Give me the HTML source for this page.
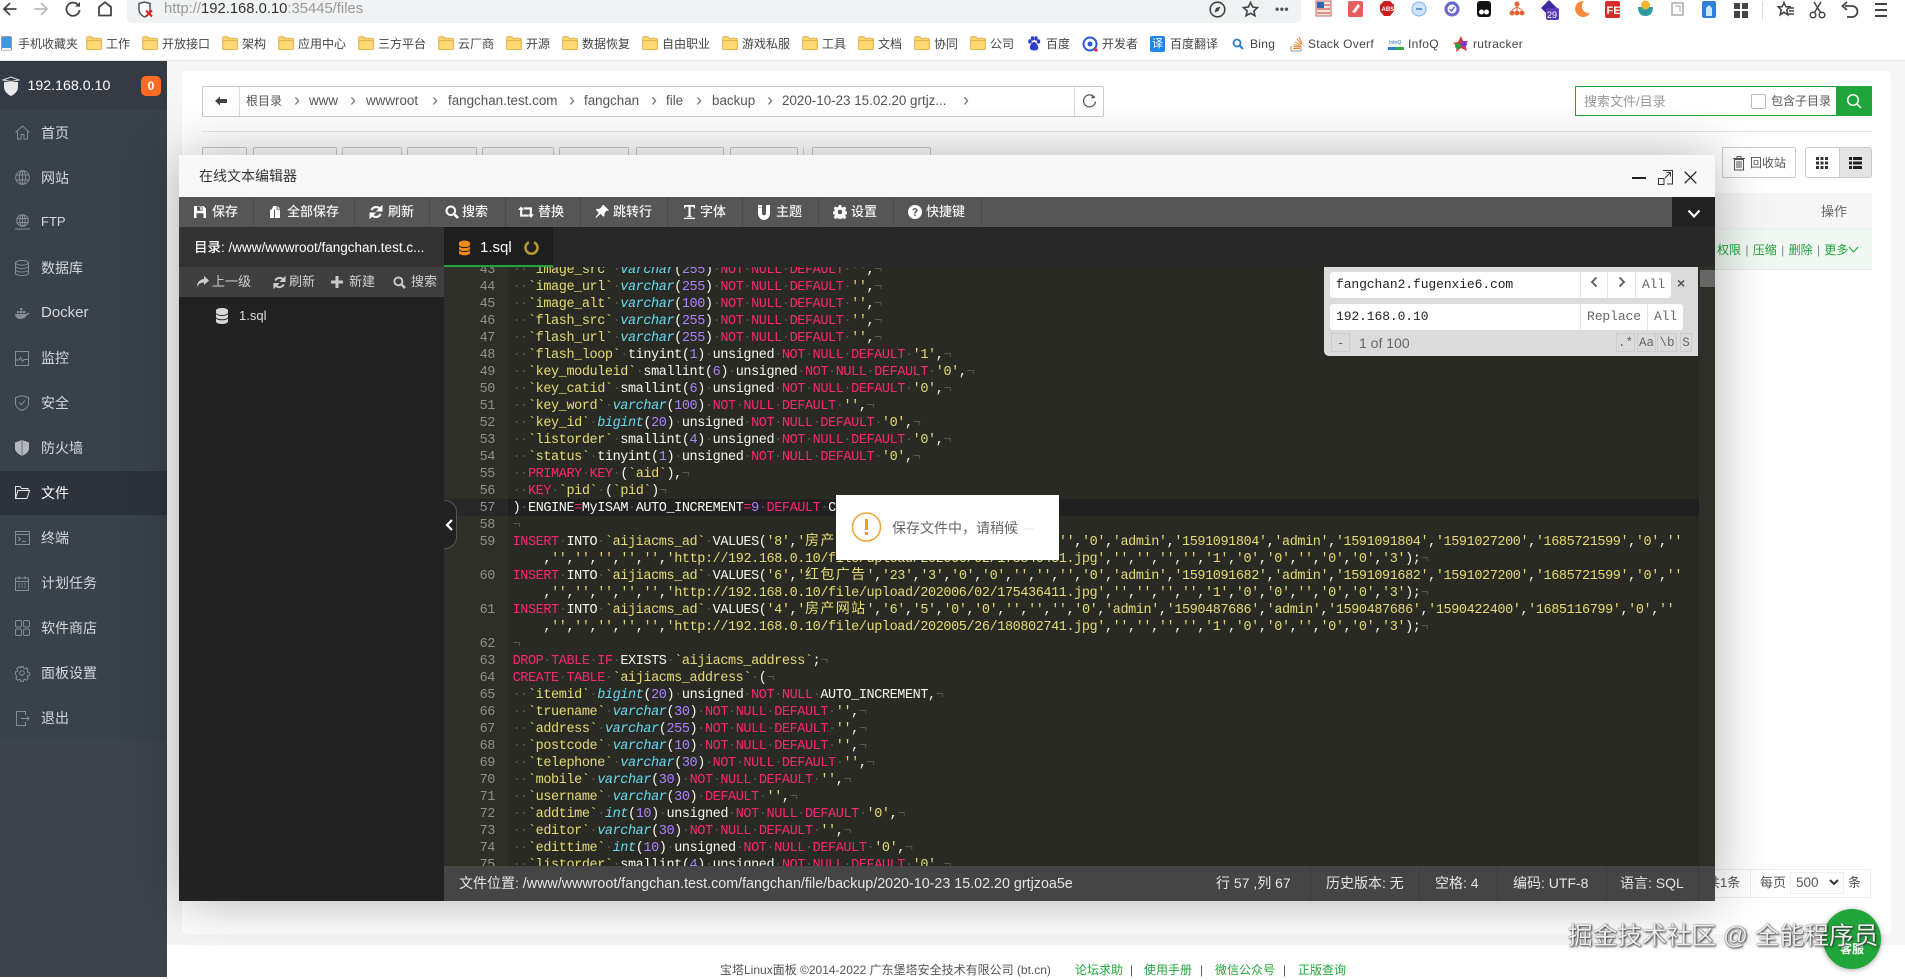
<!DOCTYPE html>
<html lang="zh"><head><meta charset="utf-8"><title>在线文本编辑器</title>
<style>
*{box-sizing:border-box}
html,body{margin:0;padding:0;width:1905px;height:977px;overflow:hidden;background:#fff;font-family:"Liberation Sans","Noto Sans CJK SC",sans-serif;color:#333}
.t{position:absolute;white-space:nowrap;line-height:20px;height:20px}
.a{position:absolute}
svg.i{position:absolute;overflow:visible}
.bm{font-size:12px;color:#444;top:34px}
.side{font-size:14px;color:#d5d8db;left:41px}
.path{font-size:13.4px;color:#555;top:91px}
.arr{font-size:18px;color:#777;top:90px}
.tb{font-size:13px;color:#f2f2f2;top:202px;font-weight:500}
.sep{position:absolute;top:197px;width:1px;height:30px;background:#4a4a4a}
.fb{font-size:13px;color:#cfcfcf;top:272px}
.st{font-size:14px;color:#e6e6e6;top:873px}
.ssep{position:absolute;top:866px;width:1px;height:35px;background:#3c3c3c}
.btn{position:absolute;top:147px;height:31px;border:1px solid #ccc;border-radius:2px;background:#fff}
pre{margin:0;font-family:"Liberation Mono","DejaVu Sans Mono",monospace;font-size:13.5px;letter-spacing:-.41px;line-height:17px}
.code{color:#f8f8f2}
.code b{color:#f92672;font-weight:normal}
.code i{color:#66d9ef;font-style:italic}
.code u{color:#e6db74;text-decoration:none}
.code s{color:#ae81ff;text-decoration:none}
.code em{color:#55564f;font-style:normal}
.code span{font-family:"Noto Sans CJK SC",sans-serif;font-size:14px;letter-spacing:1.38px;line-height:0}
.sb{position:absolute;background:#fff;height:26px;font-family:"Liberation Mono",monospace;font-size:13px;line-height:26px;color:#555}
.sc{position:absolute;top:0;height:26px;border-left:1px solid #e2e2e2;text-align:center}
.opt{position:absolute;top:333px;height:19px;border:1px solid #ccc;font-family:"Liberation Mono",monospace;font-size:12.5px;line-height:18px;text-align:center;color:#666}
.g{color:#20a53a}
</style></head><body>
<svg width="0" height="0" style="position:absolute">
<symbol id="fo" viewBox="0 0 16 14"><path d="M.7 2.2c0-.8.5-1.4 1.3-1.4h3.8l1.5 1.6h6.7c.8 0 1.3.6 1.3 1.4v8.6c0 .8-.5 1.3-1.3 1.3H2c-.8 0-1.3-.5-1.3-1.3z" fill="#ffd873" stroke="#e3aa3d"/><path d="M1 4.4h14" stroke="#e3aa3d" stroke-width=".8"/></symbol>
<symbol id="save" viewBox="0 0 14 14"><path fill="#fff" fill-rule="evenodd" d="M1 1h9.5L13 3.5V13H1zM4 1.5v4.2h5.6V1.5zM7.3 2h1.5v3H7.3zM3.5 8.2V13h7V8.2z"/></symbol>
<symbol id="copy" viewBox="0 0 14 14"><path fill="#fff" d="M5.2 1h3.4v3.6H12V13H7V4.6H3.5zM9.5 1l2.6 2.7H9.5zM2 4.6h4v8.4H2z"/></symbol>
<symbol id="ref" viewBox="0 0 14 14"><path fill="none" stroke-width="2.1" d="M11.6 4.6A5.2 5.2 0 0 0 2.4 5M2.4 9.4A5.2 5.2 0 0 0 11.6 9"/><path d="M13 1v5H8zM1 13V8h5z"/></symbol>
<symbol id="sea" viewBox="0 0 14 14"><circle cx="5.8" cy="5.8" r="4.3" fill="none" stroke="#fff" stroke-width="2"/><path d="M9 9l4 4" stroke="#fff" stroke-width="2.6"/></symbol>
<symbol id="ret" viewBox="0 0 16 14"><path fill="#fff" d="M3 1.5l3.2 3.4H4.2v4.6h5.3l1.8 2.1H2.1V4.9H0zM5 2.4h8.9v7h2.1L13 12.7 9.8 9.4h2V4.5H6.7z"/></symbol>
<symbol id="pin" viewBox="0 0 14 14"><path fill="#fff" d="M8.6 0L14 5.4l-1.3.5-1-.5-2.4 3 .2 2.3-1 1-3-3L1 13l-.8-.2 3.6-5-3-3 1-1 2.3.2 3-2.4-.5-1z"/></symbol>
<symbol id="font" viewBox="0 0 14 14"><path fill="#fff" d="M1 0h11v3.4h-1c-.2-1-.4-1.6-1.2-1.6H7.6v9.6h1.6V12H3.800v-.6h1.7V1.800H3.400c-.9 0-1.100.6-1.300 1.600H1zM1 12.800h11V14H1z"/></symbol>
<symbol id="mag" viewBox="0 0 12 15"><path fill="#fff" d="M0 0h4v8.300c0 1.200.9 2 2 2s2-.8 2-2V0h4v8.300C12 12 9.400 15 6 15S0 12 0 8.300zM0 3h4v-.4H0zM8 2.600h4V3H8z"/></symbol>
<symbol id="cog" viewBox="0 0 14 14"><path fill="#fff" fill-rule="evenodd" d="M5.800 0h2.400l.4 2 1.300.6 1.700-1.100 1.700 1.700-1.100 1.700.6 1.300 2 .4v2.400l-2 .4-.6 1.300 1.100 1.700-1.700 1.700-1.700-1.100-1.300.6-.4 2H5.800l-.4-2-1.300-.6-1.700 1.100L.7 12.300l1.100-1.700-.6-1.300-2-.4V6.500l2-.4.6-1.300L.7 3.100 2.400 1.400l1.700 1.100 1.300-.6zM7 4.700a2.300 2.300 0 1 0 0 4.600 2.300 2.300 0 0 0 0-4.600z"/></symbol>
<symbol id="que" viewBox="0 0 14 14"><circle cx="7" cy="7" r="7" fill="#fff"/><path d="M4.500 5.200C4.700 3.800 5.700 3.100 7 3.100c1.500 0 2.600.9 2.600 2.200 0 1.900-2 1.900-2 3.300H6.200c0-2.200 1.800-2.200 1.800-3.300 0-.5-.4-.9-1-.9-.6 0-1 .4-1.100 1z" fill="#565656"/><rect x="6.200" y="9.300" width="1.500" height="1.600" fill="#565656"/></symbol>
<symbol id="db" viewBox="0 0 12 16"><path d="M0 2.500C0 1 2.700 0 6 0s6 1 6 2.500V4.600C12 6 9.300 7 6 7S0 6 0 4.600zM0 6.300C1.300 7.500 3.500 8 6 8s4.700-.5 6-1.700v2.600C12 10.300 9.300 11.300 6 11.300S0 10.300 0 8.900zM0 10.600c1.300 1.200 3.500 1.700 6 1.700s4.700-.5 6-1.700v2.800C12 15 9.300 16 6 16s-6-1-6-2.600z"/></symbol>
</svg>

<!-- browser chrome -->
<div class="a" style="left:0;top:0;width:1905px;height:61px;background:#fff;border-bottom:1px solid #e8e8e8"></div>
<div class="a" style="left:127px;top:0;width:1174px;height:23px;background:#f1f2f3;border-radius:0 0 5px 5px"></div>
<svg class="i" style="left:2px;top:1px" width="16" height="16" viewBox="0 0 16 16"><path d="M14.500 8H2M8 2L2 8l6 6" fill="none" stroke="#444" stroke-width="1.800"/></svg>
<svg class="i" style="left:33px;top:1px" width="16" height="16" viewBox="0 0 16 16"><path d="M1.500 8H14M8 2l6 6-6 6" fill="none" stroke="#bbb" stroke-width="1.800"/></svg>
<svg class="i" style="left:65px;top:1px" width="16" height="16" viewBox="0 0 16 16"><path d="M13.500 4.500A6.600 6.600 0 1 0 14.600 9" fill="none" stroke="#444" stroke-width="1.800"/><path d="M10 5.600h5V1z" fill="#444"/></svg>
<svg class="i" style="left:97px;top:1px" width="16" height="16" viewBox="0 0 16 16"><path d="M2 14.500V6l6-4.800L14 6v8.500z" fill="none" stroke="#444" stroke-width="1.800" stroke-linejoin="round"/></svg>
<svg class="i" style="left:137px;top:1px" width="18" height="18" viewBox="0 0 18 18"><path d="M2 2.500L7.500 1 13 2.500v6c0 3.500-2.500 6-5.500 7.500C4.500 14.500 2 12 2 8.500z" fill="#fff" stroke="#555" stroke-width="1.500"/><path d="M9 9.500l6 6M15 9.500l-6 6" stroke="#d22" stroke-width="2"/></svg>
<div class="t" style="left:164px;top:-1px;font-size:14.800px;color:#999">http://<span style="color:#333">192.168.0.10</span>:35445/files</div>
<svg class="i" style="left:1209px;top:1px" width="17" height="17" viewBox="0 0 17 17"><circle cx="8.500" cy="8.500" r="7.300" fill="none" stroke="#444" stroke-width="1.600"/><path d="M11.500 5.500L9.500 10 5.500 11.500 7 7z" fill="#444"/></svg>
<svg class="i" style="left:1242px;top:1px" width="17" height="17" viewBox="0 0 17 17"><path d="M8.500 1.500l2.100 4.500 4.900.6-3.600 3.300 1 4.800-4.400-2.400-4.400 2.400 1-4.800L1.500 6.600 6.400 6z" fill="none" stroke="#444" stroke-width="1.600"/></svg>
<div class="t" style="left:1275px;top:-1px;font-size:12px;font-weight:bold;color:#555;letter-spacing:.5px">•••</div>
<!-- extensions -->
<svg class="i" style="left:1315px;top:0" width="450" height="22" viewBox="0 0 450 22">
<rect x="1" y="1" width="15" height="15" fill="#f1e6de" stroke="#c66" /><path d="M2 5h13M2 9h13M2 13h13" stroke="#d33"/><rect x="2" y="2" width="7" height="6" fill="#36a"/>
<g transform="translate(33,0)"><rect x="0" y="1" width="15" height="16" rx="2" fill="#e85d5d"/><path d="M4 12l6-8 2 2-5 7z" fill="#fff"/></g>
<g transform="translate(64,0)"><path d="M5 1h6l4 4v6l-4 5H5l-4-5V5z" fill="#c81e1e"/><text x="2.500" y="11" font-size="6" font-weight="bold" fill="#fff" font-family="Liberation Sans">ABS</text></g>
<g transform="translate(96,0)"><circle cx="8" cy="9" r="7" fill="#cfe3fb" stroke="#7fb1ec"/><rect x="5" y="8" width="6" height="2" fill="#5f9be0"/></g>
<g transform="translate(129,0)"><circle cx="8" cy="9" r="7.500" fill="#6a66cc"/><circle cx="8" cy="9" r="4.500" fill="#fff"/><path d="M5.500 9l2 2 3-4" stroke="#6a66cc" stroke-width="1.500" fill="none"/></g>
<g transform="translate(161,0)"><rect x="1" y="1" width="14" height="16" rx="3" fill="#111"/><circle cx="5.500" cy="12" r="2.500" fill="#fff"/><circle cx="10.500" cy="12" r="2.500" fill="#fff"/></g>
<g transform="translate(194,0)"><circle cx="8" cy="4" r="2.500" fill="#e2633b"/><circle cx="3" cy="13" r="2.500" fill="#e2633b"/><circle cx="8" cy="13" r="2.500" fill="#e2633b"/><circle cx="13" cy="13" r="2.500" fill="#e2633b"/><path d="M8 6v5M3 10l5-3 5 3" stroke="#e2633b" fill="none"/></g>
<g transform="translate(226,0)"><path d="M8 0l8 8-8 8-8-8z" fill="#3a2a9e"/><rect x="5" y="8" width="13" height="12" rx="2" fill="#5a3bb4"/><text x="6" y="18" font-size="9" fill="#fff" font-family="Liberation Sans">29</text></g>
<g transform="translate(258,0)"><path d="M11 1a8 8 0 1 0 6 12 7 7 0 0 1-6-12z" fill="#f98a3c"/></g>
<g transform="translate(290,0)"><rect x="0" y="1" width="15" height="17" rx="2" fill="#d62b2b"/><text x="1.500" y="14" font-size="11" font-weight="bold" fill="#fff" font-family="Liberation Sans">FE</text></g>
<g transform="translate(322,0)"><path d="M1 7h15c0 6-3 9-7.500 9S1 13 1 7z" fill="#2c9aa0"/><circle cx="8.500" cy="5" r="4.500" fill="#f1b533"/></g>
<g transform="translate(356,0)"><rect x="1" y="3" width="11" height="12" fill="none" stroke="#aaa" stroke-width="1.500"/><path d="M4 6h5v6" fill="none" stroke="#aaa"/></g>
<g transform="translate(386,0)"><rect x="1" y="1" width="14" height="17" rx="2" fill="#2f80d8"/><path d="M5 16V8l3-3 3 3v8z" fill="#cfe7fb"/></g>
<g transform="translate(419,0)" fill="#444"><rect x="0" y="3" width="6" height="6"/><rect x="8" y="3" width="6" height="6"/><rect x="0" y="11" width="6" height="7"/><rect x="8" y="11" width="6" height="7"/></g>
</svg>
<div class="a" style="left:1762px;top:2px;width:1px;height:18px;background:#ddd"></div>
<svg class="i" style="left:1777px;top:1px" width="18" height="18" viewBox="0 0 18 18"><path d="M7 1.500l1.800 4.300h4l-3 3 1 5-3.800-2.600-3.800 2.600 1-5-3-3h4z" fill="none" stroke="#444" stroke-width="1.500"/><path d="M12 7h5M12 10h5M11 13h6" stroke="#444" stroke-width="1.400"/></svg>
<svg class="i" style="left:1809px;top:1px" width="17" height="18" viewBox="0 0 17 18"><circle cx="4" cy="14" r="2.800" fill="none" stroke="#444" stroke-width="1.500"/><circle cx="13" cy="14" r="2.800" fill="none" stroke="#444" stroke-width="1.500"/><path d="M5.500 11.500L12 1M11.500 11.500L5 1" stroke="#444" stroke-width="1.500"/></svg>
<svg class="i" style="left:1841px;top:1px" width="17" height="18" viewBox="0 0 17 18"><path d="M4 5h7a4.500 4.500 0 0 1 0 11H6" fill="none" stroke="#444" stroke-width="1.800"/><path d="M6 1L1.500 5 6 9" fill="none" stroke="#444" stroke-width="1.800"/></svg>
<svg class="i" style="left:1874px;top:1px" width="14" height="18" viewBox="0 0 14 18"><path d="M1 3h12M1 9h12M1 15h12" stroke="#444" stroke-width="2"/></svg>

<!-- bookmarks -->
<svg class="i" style="left:1px;top:36px" width="11" height="15" viewBox="0 0 11 15"><rect x=".5" y=".5" width="10" height="14" rx="1.500" fill="#3b95e8" stroke="#999"/><rect x="1" y="12" width="9" height="2.500" fill="#eee"/></svg>
<div class="t bm" style="left:18px">手机收藏夹</div>
<svg class="i" style="left:86px;top:36px" width="16" height="14"><use href="#fo"/></svg><div class="t bm" style="left:106px">工作</div>
<svg class="i" style="left:142px;top:36px" width="16" height="14"><use href="#fo"/></svg><div class="t bm" style="left:162px">开放接口</div>
<svg class="i" style="left:222px;top:36px" width="16" height="14"><use href="#fo"/></svg><div class="t bm" style="left:242px">架构</div>
<svg class="i" style="left:278px;top:36px" width="16" height="14"><use href="#fo"/></svg><div class="t bm" style="left:298px">应用中心</div>
<svg class="i" style="left:358px;top:36px" width="16" height="14"><use href="#fo"/></svg><div class="t bm" style="left:378px">三方平台</div>
<svg class="i" style="left:438px;top:36px" width="16" height="14"><use href="#fo"/></svg><div class="t bm" style="left:458px">云厂商</div>
<svg class="i" style="left:506px;top:36px" width="16" height="14"><use href="#fo"/></svg><div class="t bm" style="left:526px">开源</div>
<svg class="i" style="left:562px;top:36px" width="16" height="14"><use href="#fo"/></svg><div class="t bm" style="left:582px">数据恢复</div>
<svg class="i" style="left:642px;top:36px" width="16" height="14"><use href="#fo"/></svg><div class="t bm" style="left:662px">自由职业</div>
<svg class="i" style="left:722px;top:36px" width="16" height="14"><use href="#fo"/></svg><div class="t bm" style="left:742px">游戏私服</div>
<svg class="i" style="left:802px;top:36px" width="16" height="14"><use href="#fo"/></svg><div class="t bm" style="left:822px">工具</div>
<svg class="i" style="left:858px;top:36px" width="16" height="14"><use href="#fo"/></svg><div class="t bm" style="left:878px">文档</div>
<svg class="i" style="left:914px;top:36px" width="16" height="14"><use href="#fo"/></svg><div class="t bm" style="left:934px">协同</div>
<svg class="i" style="left:970px;top:36px" width="16" height="14"><use href="#fo"/></svg><div class="t bm" style="left:990px">公司</div>
<svg class="i" style="left:1027px;top:36px" width="14" height="15" viewBox="0 0 14 15" fill="#2f3fc4"><ellipse cx="3" cy="5.500" rx="1.700" ry="2.200"/><ellipse cx="5.500" cy="2.500" rx="1.700" ry="2.200"/><ellipse cx="9" cy="2.500" rx="1.700" ry="2.200"/><ellipse cx="11.500" cy="5.500" rx="1.700" ry="2.200"/><path d="M7 6c2 0 5 4 4 7-1 2-6 2-8 0-1-3 2-7 4-7z"/></svg>
<div class="t bm" style="left:1046px">百度</div>
<svg class="i" style="left:1082px;top:36px" width="16" height="16" viewBox="0 0 16 16"><circle cx="8" cy="8" r="6.500" fill="none" stroke="#2a58d8" stroke-width="2"/><circle cx="8" cy="8" r="2.500" fill="#2a58d8"/><circle cx="14" cy="14" r="1.800" fill="#e33"/></svg>
<div class="t bm" style="left:1102px">开发者</div>
<div class="a" style="left:1150px;top:36px;width:15px;height:16px;background:#1f88ef;border-radius:2px;color:#fff;font-size:11px;line-height:16px;text-align:center">译</div>
<div class="t bm" style="left:1170px">百度翻译</div>
<svg class="i" style="left:1232px;top:38px" width="12" height="12" viewBox="0 0 12 12"><circle cx="5" cy="5" r="3.500" fill="none" stroke="#2b7bd1" stroke-width="1.800"/><path d="M7.500 7.500L11 11" stroke="#2b7bd1" stroke-width="2"/></svg>
<div class="t bm" style="left:1250px;letter-spacing:.3px">Bing</div>
<svg class="i" style="left:1290px;top:36px" width="13" height="16" viewBox="0 0 13 16"><path d="M1 10v5h10v-5" fill="none" stroke="#999"/><path d="M3 12.500h7M3.200 10.500l6.800.8M3.800 8.500l6.500 2M5 6l6 3.500M7 3l4.500 5.500M9 1l3 6.500" stroke="#e88326"/></svg>
<div class="t bm" style="left:1308px;width:67px;overflow:hidden;letter-spacing:.3px">Stack Overf</div>
<svg class="i" style="left:1388px;top:37px" width="16" height="15" viewBox="0 0 16 15"><text x="1" y="7" font-size="5" fill="#36a" font-family="Liberation Sans">InfoQ</text><rect x="0" y="10" width="7" height="3" fill="#2a7be0"/><rect x="7" y="10" width="9" height="3" fill="#2aa84a"/></svg>
<div class="t bm" style="left:1408px;letter-spacing:.3px">InfoQ</div>
<svg class="i" style="left:1453px;top:36px" width="16" height="16" viewBox="0 0 16 16"><path d="M8 0l2 5 5 0-3 4 2 6-6-3-5 4 1-6L0 7l5-1z" fill="#d33"/><circle cx="5" cy="10" r="3" fill="#2a9d4a"/><circle cx="11" cy="8" r="3" fill="#7b3bd1"/></svg>
<div class="t bm" style="left:1473px;letter-spacing:.3px">rutracker</div>

<!-- page background -->
<div class="a" style="left:167px;top:61px;width:1738px;height:884px;background:#f6f6f6"></div>
<div class="a" style="left:182px;top:71px;width:1709px;height:863px;background:#fff;border-radius:5px"></div>

<!-- path bar -->
<div class="a" style="left:202px;top:86px;width:902px;height:31px;border:1px solid #ccc;border-radius:2px;background:#fff"></div>
<div class="a" style="left:239px;top:87px;width:1px;height:29px;background:#ddd"></div>
<div class="a" style="left:1074px;top:87px;width:1px;height:29px;background:#ddd"></div>
<svg class="i" style="left:215px;top:95px" width="12" height="12" viewBox="0 0 12 12"><path d="M0 6l5-4.500V4h7v4H5v2.500z" fill="#444"/></svg>
<svg class="i" style="left:1082px;top:93px" width="15" height="16" viewBox="0 0 15 16"><path d="M12.500 4.500A6 6 0 1 0 13.500 8.500" fill="none" stroke="#555" stroke-width="1.200"/><path d="M10 1.500l3.500 3.200L9.500 5.500z" fill="#555"/></svg>
<div class="t path" style="left:246px;font-size:12px">根目录</div><div class="t arr" style="left:294px">›</div>
<div class="t path" style="left:309px">www</div><div class="t arr" style="left:350px">›</div>
<div class="t path" style="left:366px">wwwroot</div><div class="t arr" style="left:432px">›</div>
<div class="t path" style="left:448px">fangchan.test.com</div><div class="t arr" style="left:569px">›</div>
<div class="t path" style="left:584px">fangchan</div><div class="t arr" style="left:651px">›</div>
<div class="t path" style="left:666px">file</div><div class="t arr" style="left:696px">›</div>
<div class="t path" style="left:712px">backup</div><div class="t arr" style="left:767px">›</div>
<div class="t path" style="left:782px">2020-10-23 15.02.20 grtjz...</div><div class="t arr" style="left:963px">›</div>

<!-- search -->
<div class="a" style="left:1575px;top:86px;width:262px;height:30px;border:1px solid #20a53a;background:#fff"></div>
<div class="a" style="left:1836px;top:86px;width:36px;height:30px;background:#20a53a"></div>
<svg class="i" style="left:1846px;top:93px" width="16" height="16" viewBox="0 0 16 16"><circle cx="7" cy="7" r="5.300" fill="none" stroke="#fff" stroke-width="1.500"/><path d="M11 11l4 4" stroke="#fff" stroke-width="1.500"/></svg>
<div class="t" style="left:1584px;top:92px;font-size:13px;color:#999">搜索文件/目录</div>
<div class="a" style="left:1751px;top:94px;width:15px;height:15px;border:1px solid #bbb;border-radius:2px;background:#fff"></div>
<div class="t" style="left:1771px;top:91px;font-size:12px;color:#555">包含子目录</div>
<div class="a" style="left:202px;top:131px;width:1670px;height:1px;background:#e6e6e6"></div>

<!-- buttons row -->
<div class="btn" style="left:202px;width:45px"></div>
<div class="btn" style="left:253px;width:84px"></div>
<div class="btn" style="left:342px;width:60px"></div>
<div class="btn" style="left:407px;width:70px"></div>
<div class="btn" style="left:482px;width:72px"></div>
<div class="btn" style="left:559px;width:70px"></div>
<div class="btn" style="left:636px;width:88px"></div>
<div class="btn" style="left:730px;width:68px"></div>
<div class="a" style="left:803px;top:147px;width:1px;height:31px;background:#ddd"></div>
<div class="btn" style="left:812px;width:119px"></div>
<div class="btn" style="left:1722px;width:74px"></div>
<svg class="i" style="left:1733px;top:156px" width="12" height="14" viewBox="0 0 12 14"><path d="M0 2.500h12M4 2V.6h4V2M1.500 3.500h9V14h-9z" fill="none" stroke="#555"/><path d="M4 5v7M6 5v7M8 5v7" stroke="#555"/></svg>
<div class="t" style="left:1750px;top:153px;font-size:12px;color:#555">回收站</div>
<div class="btn" style="left:1805px;width:67px;border-radius:3px;overflow:hidden"><div class="a" style="left:33px;top:0;width:33px;height:29px;background:#e4e4e4;border-left:1px solid #ccc"></div></div>
<svg class="i" style="left:1816px;top:157px" width="12" height="12" viewBox="0 0 12 12" fill="#333"><rect width="3" height="3"/><rect x="4.500" width="3" height="3"/><rect x="9" width="3" height="3"/><rect y="4.500" width="3" height="3"/><rect x="4.500" y="4.500" width="3" height="3"/><rect x="9" y="4.500" width="3" height="3"/><rect y="9" width="3" height="3"/><rect x="4.500" y="9" width="3" height="3"/><rect x="9" y="9" width="3" height="3"/></svg>
<svg class="i" style="left:1849px;top:157px" width="13" height="12" viewBox="0 0 13 12" fill="#222"><rect width="3" height="3"/><rect x="4" width="9" height="3"/><rect y="4.500" width="3" height="3"/><rect x="4" y="4.500" width="9" height="3"/><rect y="9" width="3" height="3"/><rect x="4" y="9" width="9" height="3"/></svg>

<!-- table -->
<div class="a" style="left:1715px;top:193px;width:157px;height:36px;background:#f6f6f6;border-bottom:1px solid #eee"></div>
<div class="t" style="left:1821px;top:202px;font-size:13px;color:#666">操作</div>
<div class="a" style="left:1715px;top:229px;width:157px;height:41px;background:#f1f8f3;border-bottom:1px solid #e9e9e9"></div>
<div class="t g" style="left:1717px;top:240px;font-size:12px;word-spacing:1px">权限 <span style="color:#888">|</span> 压缩 <span style="color:#888">|</span> 删除 <span style="color:#888">|</span> 更多<svg width="11" height="8" viewBox="0 0 11 8"><path d="M1 1l4.500 5L10 1" fill="none" stroke="#20a53a"/></svg></div>

<!-- pagination -->
<div class="a" style="left:1700px;top:869px;width:171px;height:29px;border:1px solid #eee"></div>
<div class="a" style="left:1750px;top:869px;width:1px;height:29px;background:#eee"></div>
<div class="t" style="left:1707px;top:873px;font-size:13px;color:#555">共1条</div>
<div class="t" style="left:1760px;top:873px;font-size:13px;color:#555">每页</div>
<div class="a" style="left:1790px;top:872px;width:54px;height:22px;border:1px solid #eee;background:#fff;font-size:13.500px;line-height:20px;padding-left:5px;color:#555">500<svg style="position:absolute;left:38px;top:6px" width="10" height="8" viewBox="0 0 10 8"><path d="M1 1l4 4 4-4" fill="none" stroke="#333" stroke-width="2"/></svg></div>
<div class="t" style="left:1848px;top:873px;font-size:13px;color:#555">条</div>

<!-- footer -->
<div class="t" style="left:720px;top:960px;font-size:12px;color:#555">宝塔Linux面板 ©2014-2022 广东堡塔安全技术有限公司 (bt.cn)</div>
<div class="t g" style="left:1075px;top:960px;font-size:12px">论坛求助</div><div class="t" style="left:1130px;top:960px;font-size:12px;color:#555">|</div>
<div class="t g" style="left:1144px;top:960px;font-size:12px">使用手册</div><div class="t" style="left:1200px;top:960px;font-size:12px;color:#555">|</div>
<div class="t g" style="left:1215px;top:960px;font-size:12px">微信公众号</div><div class="t" style="left:1283px;top:960px;font-size:12px;color:#555">|</div>
<div class="t g" style="left:1298px;top:960px;font-size:12px">正版查询</div>

<!-- sidebar -->
<div class="a" style="left:0;top:61px;width:167px;height:916px;background:#3d444d"></div>
<div class="a" style="left:0;top:110px;width:167px;height:630px;background:#39414a"></div>
<div class="a" style="left:0;top:61px;width:167px;height:49px;background:#343b44"></div>
<div class="a" style="left:0;top:471px;width:167px;height:44px;background:#2d333c"></div>
<svg class="i" style="left:2px;top:76px" width="18" height="20" viewBox="0 0 18 20"><path d="M2 6h14v5c0 4-3 7-7 9-4-2-7-5-7-9z" fill="#e8e8e8"/><path d="M1 4l8-3 8 3-8 1.500z" fill="none" stroke="#ddd"/></svg>
<div class="t" style="left:27.500px;top:76px;font-size:14.200px;color:#fff">192.168.0.10</div>
<div class="a" style="left:141px;top:76px;width:20px;height:20px;background:#ff6b22;border-radius:5px;color:#fff;font-size:12px;font-weight:bold;line-height:20px;text-align:center">0</div>
<svg class="i" style="left:15px;top:125px" width="15" height="15" viewBox="0 0 15 15"><path d="M.5 7.500L7.500 1l7 6.500M2.500 6.500V14h3.500V9.500h3V14h3.500V6.500" fill="none" stroke="#868c93"/></svg>
<div class="t side" style="top:123px">首页</div>
<svg class="i" style="left:15px;top:170px" width="15" height="15" viewBox="0 0 15 15" fill="none" stroke="#868c93"><circle cx="7.500" cy="7.500" r="6.800"/><ellipse cx="7.500" cy="7.500" rx="3.200" ry="6.800"/><path d="M1 5h13M1 10h13M7.500 1v13"/></svg>
<div class="t side" style="top:168px">网站</div>
<svg class="i" style="left:15px;top:214px" width="15" height="17" viewBox="0 0 15 17" fill="none" stroke="#868c93"><circle cx="7.500" cy="6.500" r="5.800"/><ellipse cx="7.500" cy="6.500" rx="2.700" ry="5.800"/><path d="M2 4.500h11M2 8.500h11M7.500 1v11M0 15h15"/></svg>
<div class="t side" style="top:212px;font-size:13px">FTP</div>
<svg class="i" style="left:15px;top:260px" width="14" height="16" viewBox="0 0 14 16" fill="none" stroke="#868c93"><ellipse cx="7" cy="2.800" rx="6.500" ry="2.300"/><path d="M.5 2.800v10.400c0 1.300 2.900 2.300 6.500 2.300s6.500-1 6.500-2.300V2.800M.5 6.200c0 1.300 2.900 2.300 6.500 2.300s6.500-1 6.500-2.300M.5 9.700c0 1.300 2.900 2.300 6.500 2.300s6.500-1 6.500-2.300"/></svg>
<div class="t side" style="top:258px">数据库</div>
<svg class="i" style="left:15px;top:307px" width="15" height="12" viewBox="0 0 15 12" fill="#868c93"><rect x="2" y="4" width="2.400" height="2.200"/><rect x="5" y="4" width="2.400" height="2.200"/><rect x="8" y="4" width="2.400" height="2.200"/><rect x="5" y="1" width="2.400" height="2.200"/><path d="M0 7h11.500c.3-1 1.500-1.500 3-1-.3 1-1 2-2.500 2C11 10 9 12 5 12 2 12 .4 10 0 7z"/></svg>
<div class="t side" style="top:303px;font-size:15px">Docker</div>
<svg class="i" style="left:15px;top:351px" width="14" height="15" viewBox="0 0 14 15" fill="none" stroke="#868c93"><rect x=".5" y=".5" width="13" height="14"/><path d="M1 9h3l1.500-2.500 2 4L9 8.500h4"/></svg>
<div class="t side" style="top:348px">监控</div>
<svg class="i" style="left:15px;top:395px" width="14" height="16" viewBox="0 0 14 16" fill="none" stroke="#868c93"><path d="M.5 2.500L7 .6l6.500 1.900v6c0 3-2.800 5.500-6.500 7C3.300 14 .5 11.500.5 8.500z"/><path d="M4 7.500l2.300 2.300L10 5.500"/></svg>
<div class="t side" style="top:393px">安全</div>
<svg class="i" style="left:15px;top:440px" width="14" height="16" viewBox="0 0 14 16"><path d="M0 2.500L7 0l7 2.500v6c0 3-3 5.500-7 7.500-4-2-7-4.500-7-7.500z" fill="#b4b8bc"/><path d="M7 0v16" stroke="#6c7279"/></svg>
<div class="t side" style="top:438px">防火墙</div>
<svg class="i" style="left:15px;top:486px" width="15" height="13" viewBox="0 0 15 13" fill="none" stroke="#e6e6e6"><path d="M.5 12.500V.5H5l1.500 2H13v2M.5 12.500h11.500l2.500-8H3z"/></svg>
<div class="t side" style="top:483px;color:#fff">文件</div>
<svg class="i" style="left:15px;top:531px" width="15" height="14" viewBox="0 0 15 14" fill="none" stroke="#868c93"><rect x=".5" y=".5" width="14" height="13"/><path d="M1 3.500h13M3 6l2.500 2L3 10M7 10.500h4"/></svg>
<div class="t side" style="top:528px">终端</div>
<svg class="i" style="left:15px;top:576px" width="14" height="15" viewBox="0 0 14 15" fill="none" stroke="#868c93"><rect x=".5" y="2" width="13" height="12.500"/><path d="M.5 5.500h13M4 .3v3M10 .3v3M3 8h2M6 8h2M9 8h2M3 11h2M6 11h2M9 11h2"/></svg>
<div class="t side" style="top:573px">计划任务</div>
<svg class="i" style="left:15px;top:620px" width="15" height="16" viewBox="0 0 15 16" fill="none" stroke="#868c93"><rect x=".5" y=".5" width="6" height="6.500" rx="1.500"/><rect x="8.500" y=".5" width="6" height="6.500" rx="1.500"/><rect x=".5" y="9" width="6" height="6.500" rx="1.500"/><rect x="8.500" y="9" width="6" height="6.500" rx="1.500"/></svg>
<div class="t side" style="top:618px">软件商店</div>
<svg class="i" style="left:15px;top:666px" width="14" height="14" viewBox="0 0 14 14" fill="none" stroke="#868c93"><circle cx="7" cy="7" r="2.300"/><path d="M5.800.5h2.400l.4 1.800 1.300.6 1.600-1 1.700 1.700-1 1.600.6 1.300 1.700.4v2.400l-1.700.4-.6 1.300 1 1.600-1.700 1.700-1.600-1-1.300.6-.4 1.500H5.800l-.4-1.500-1.300-.6-1.600 1-1.700-1.700 1-1.600-.6-1.300L.5 8.200V5.800l1.700-.4.6-1.300-1-1.600 1.700-1.700 1.600 1 1.300-.6z"/></svg>
<div class="t side" style="top:663px">面板设置</div>
<svg class="i" style="left:16px;top:711px" width="14" height="15" viewBox="0 0 14 15" fill="none" stroke="#868c93"><path d="M9.500 4V.5H.5v14h9V11M5 7.500h8M11 5.500l2 2-2 2"/></svg>
<div class="t side" style="top:708px">退出</div>

<!-- modal -->
<div class="a" style="left:179px;top:155px;width:1536px;height:746px;background:#222;box-shadow:1px 1px 50px rgba(0,0,0,.3)"></div>
<div class="a" style="left:179px;top:155px;width:1536px;height:42px;background:#f8f8f8"></div>
<div class="t" style="left:199px;top:166px;font-size:14px;color:#333">在线文本编辑器</div>
<div class="a" style="left:1632px;top:177px;width:14px;height:2px;background:#222"></div>
<svg class="i" style="left:1658px;top:170px" width="15" height="15" viewBox="0 0 15 15" fill="none" stroke="#333"><path d="M5 .5h9.500V14H9M.5 8.500H6v6H.5zM7 8l5-5M8.500 2.500h4v4"/></svg>
<svg class="i" style="left:1684px;top:171px" width="13" height="13" viewBox="0 0 13 13"><path d="M.7.7l11.600 11.600M12.300.7L.7 12.300" stroke="#222" stroke-width="1.300"/></svg>

<!-- editor toolbar -->
<div class="a" style="left:179px;top:197px;width:1493px;height:30px;background:#565656"></div>
<div class="a" style="left:1672px;top:197px;width:43px;height:30px;background:#222"></div>
<svg class="i" style="left:1687px;top:209px" width="14" height="10" viewBox="0 0 14 10"><path d="M1.500 1.500L7 7.500l5.500-6" fill="none" stroke="#fff" stroke-width="2.200"/></svg>
<div class="sep" style="left:253px"></div><div class="sep" style="left:354px"></div><div class="sep" style="left:429px"></div><div class="sep" style="left:505px"></div><div class="sep" style="left:580px"></div><div class="sep" style="left:667px"></div><div class="sep" style="left:742px"></div><div class="sep" style="left:818px"></div><div class="sep" style="left:893px"></div><div class="sep" style="left:981px"></div>
<svg class="i" style="left:193px;top:205px" width="14" height="14"><use href="#save"/></svg><div class="t tb" style="left:212px">保存</div>
<svg class="i" style="left:268px;top:205px" width="14" height="14"><use href="#copy"/></svg><div class="t tb" style="left:287px">全部保存</div>
<svg class="i" style="left:369px;top:205px" width="14" height="14" fill="#fff" stroke="#fff"><use href="#ref"/></svg><div class="t tb" style="left:388px">刷新</div>
<svg class="i" style="left:445px;top:205px" width="14" height="14"><use href="#sea"/></svg><div class="t tb" style="left:462px">搜索</div>
<svg class="i" style="left:518px;top:205px" width="16" height="14"><use href="#ret"/></svg><div class="t tb" style="left:538px">替换</div>
<svg class="i" style="left:595px;top:205px" width="14" height="14"><use href="#pin"/></svg><div class="t tb" style="left:613px">跳转行</div>
<svg class="i" style="left:683px;top:205px" width="14" height="14"><use href="#font"/></svg><div class="t tb" style="left:700px">字体</div>
<svg class="i" style="left:758px;top:205px" width="12" height="15"><use href="#mag"/></svg><div class="t tb" style="left:776px">主题</div>
<svg class="i" style="left:833px;top:205px" width="14" height="14"><use href="#cog"/></svg><div class="t tb" style="left:851px">设置</div>
<svg class="i" style="left:908px;top:205px" width="14" height="14"><use href="#que"/></svg><div class="t tb" style="left:926px">快捷键</div>

<!-- file panel -->
<div class="a" style="left:179px;top:227px;width:265px;height:40px;background:#333"></div>
<div class="t" style="left:194px;top:238px;font-size:13.500px;color:#fff;font-weight:500">目录: /www/wwwroot/fangchan.test.c...</div>
<div class="a" style="left:179px;top:267px;width:265px;height:30px;background:#3f3f3f"></div>
<svg class="i" style="left:197px;top:276px" width="12" height="11" viewBox="0 0 12 11"><path d="M7 0l5 4.500L7 9V6.500C4 6.500 1.800 7.500 0 11c0-4.500 2.500-7.500 7-8z" fill="#ccc"/></svg>
<div class="t fb" style="left:212px">上一级</div>
<svg class="i" style="left:273px;top:276px" width="13" height="13" fill="#ccc" stroke="#ccc" viewBox="0 0 14 14"><use href="#ref"/></svg>
<div class="t fb" style="left:289px">刷新</div>
<svg class="i" style="left:331px;top:276px" width="12" height="12" viewBox="0 0 12 12"><path d="M4.500 0h3v4.500H12v3H7.500V12h-3V7.500H0v-3h4.500z" fill="#ccc"/></svg>
<div class="t fb" style="left:349px">新建</div>
<svg class="i" style="left:393px;top:276px" width="13" height="13" viewBox="0 0 14 14"><circle cx="5.800" cy="5.800" r="4.300" fill="none" stroke="#ccc" stroke-width="2"/><path d="M9 9l4 4" stroke="#ccc" stroke-width="2.600"/></svg>
<div class="t fb" style="left:411px">搜索</div>
<svg class="i" style="left:216px;top:308px" width="12" height="16" fill="#d8d8d8"><use href="#db"/></svg>
<div class="t" style="left:239px;top:306px;font-size:13px;color:#ddd">1.sql</div>

<!-- tab bar -->
<div class="a" style="left:444px;top:227px;width:1271px;height:40px;background:#282828"></div>
<div class="a" style="left:444px;top:227px;width:109px;height:40px;background:#1e1e1e;border-bottom:2px solid #20a53a"></div>
<svg class="i" style="left:459px;top:240px" width="11" height="16" fill="#f08a1d"><use href="#db"/></svg>
<div class="t" style="left:480px;top:238px;font-size:15px;color:#fff">1.sql</div>
<svg class="i" style="left:524px;top:240px" width="15" height="15" viewBox="0 0 15 15"><path d="M5 2.300A6 6 0 1 0 10 2.300" fill="none" stroke="#b39a2a" stroke-width="2.600"/></svg>

<!-- editor -->
<div class="a" style="left:444px;top:267px;width:64px;height:599px;background:#2e3028"></div>
<div class="a" style="left:508px;top:267px;width:1191px;height:599px;background:#292a24"></div>
<div class="a" style="left:1699px;top:267px;width:16px;height:599px;background:#2e2f28"></div>
<div class="a" style="left:1700px;top:270px;width:15px;height:17px;background:#666"></div>
<div class="a" style="left:444px;top:499px;width:64px;height:17px;background:#272727"></div>
<div class="a" style="left:508px;top:499px;width:1191px;height:17px;background:#202020"></div>
<div class="a" style="left:444px;top:267px;width:1255px;height:599px;overflow:hidden">
<pre class="a" style="left:0;top:-5px;width:51px;text-align:right;color:#8f908a">43
44
45
46
47
48
49
50
51
52
53
54
55
56
57
58
59

60

61

62
63
64
65
66
67
68
69
70
71
72
73
74
75</pre>
<pre class="a code" style="left:68.600px;top:-5px"><em>··</em><u>`image_src`</u><em>·</em><i>varchar</i>(<s>255</s>)<em>·</em><b>NOT</b><em>·</em><b>NULL</b><em>·</em><b>DEFAULT</b><em>·</em><u>''</u>,<em>¬</em>
<em>··</em><u>`image_url`</u><em>·</em><i>varchar</i>(<s>255</s>)<em>·</em><b>NOT</b><em>·</em><b>NULL</b><em>·</em><b>DEFAULT</b><em>·</em><u>''</u>,<em>¬</em>
<em>··</em><u>`image_alt`</u><em>·</em><i>varchar</i>(<s>100</s>)<em>·</em><b>NOT</b><em>·</em><b>NULL</b><em>·</em><b>DEFAULT</b><em>·</em><u>''</u>,<em>¬</em>
<em>··</em><u>`flash_src`</u><em>·</em><i>varchar</i>(<s>255</s>)<em>·</em><b>NOT</b><em>·</em><b>NULL</b><em>·</em><b>DEFAULT</b><em>·</em><u>''</u>,<em>¬</em>
<em>··</em><u>`flash_url`</u><em>·</em><i>varchar</i>(<s>255</s>)<em>·</em><b>NOT</b><em>·</em><b>NULL</b><em>·</em><b>DEFAULT</b><em>·</em><u>''</u>,<em>¬</em>
<em>··</em><u>`flash_loop`</u><em>·</em>tinyint(<s>1</s>)<em>·</em>unsigned<em>·</em><b>NOT</b><em>·</em><b>NULL</b><em>·</em><b>DEFAULT</b><em>·</em><u>'1'</u>,<em>¬</em>
<em>··</em><u>`key_moduleid`</u><em>·</em>smallint(<s>6</s>)<em>·</em>unsigned<em>·</em><b>NOT</b><em>·</em><b>NULL</b><em>·</em><b>DEFAULT</b><em>·</em><u>'0'</u>,<em>¬</em>
<em>··</em><u>`key_catid`</u><em>·</em>smallint(<s>6</s>)<em>·</em>unsigned<em>·</em><b>NOT</b><em>·</em><b>NULL</b><em>·</em><b>DEFAULT</b><em>·</em><u>'0'</u>,<em>¬</em>
<em>··</em><u>`key_word`</u><em>·</em><i>varchar</i>(<s>100</s>)<em>·</em><b>NOT</b><em>·</em><b>NULL</b><em>·</em><b>DEFAULT</b><em>·</em><u>''</u>,<em>¬</em>
<em>··</em><u>`key_id`</u><em>·</em><i>bigint</i>(<s>20</s>)<em>·</em>unsigned<em>·</em><b>NOT</b><em>·</em><b>NULL</b><em>·</em><b>DEFAULT</b><em>·</em><u>'0'</u>,<em>¬</em>
<em>··</em><u>`listorder`</u><em>·</em>smallint(<s>4</s>)<em>·</em>unsigned<em>·</em><b>NOT</b><em>·</em><b>NULL</b><em>·</em><b>DEFAULT</b><em>·</em><u>'0'</u>,<em>¬</em>
<em>··</em><u>`status`</u><em>·</em>tinyint(<s>1</s>)<em>·</em>unsigned<em>·</em><b>NOT</b><em>·</em><b>NULL</b><em>·</em><b>DEFAULT</b><em>·</em><u>'0'</u>,<em>¬</em>
<em>··</em><b>PRIMARY</b><em>·</em><b>KEY</b><em>·</em>(<u>`aid`</u>),<em>¬</em>
<em>··</em><b>KEY</b><em>·</em><u>`pid`</u><em>·</em>(<u>`pid`</u>)<em>¬</em>
)<em>·</em>ENGINE<b>=</b>MyISAM<em>·</em>AUTO_INCREMENT<b>=</b><s>9</s><em>·</em><b>DEFAULT</b><em>·</em>CHARSET<b>=</b>utf8;<em>¬</em>
<em>¬</em>
<b>INSERT</b><em>·</em>INTO<em>·</em><u>`aijiacms_ad`</u><em>·</em>VALUES(<u>'8'</u>,<u>'<span>房产网站</span>'</u>,<u>'23'</u>,<u>'3'</u>,<u>'0'</u>,<u>'0'</u>,<u>''</u>,<u>''</u>,<u>''</u>,<u>'0'</u>,<u>'admin'</u>,<u>'1591091804'</u>,<u>'admin'</u>,<u>'1591091804'</u>,<u>'1591027200'</u>,<u>'1685721599'</u>,<u>'0'</u>,<u>''</u>
    ,<u>''</u>,<u>''</u>,<u>''</u>,<u>''</u>,<u>''</u>,<u>'http://192.168.0.10/file/upload/202006/02/175840431.jpg'</u>,<u>''</u>,<u>''</u>,<u>''</u>,<u>''</u>,<u>'1'</u>,<u>'0'</u>,<u>'0'</u>,<u>''</u>,<u>'0'</u>,<u>'0'</u>,<u>'3'</u>);<em>¬</em>
<b>INSERT</b><em>·</em>INTO<em>·</em><u>`aijiacms_ad`</u><em>·</em>VALUES(<u>'6'</u>,<u>'<span>红包广告</span>'</u>,<u>'23'</u>,<u>'3'</u>,<u>'0'</u>,<u>'0'</u>,<u>''</u>,<u>''</u>,<u>''</u>,<u>'0'</u>,<u>'admin'</u>,<u>'1591091682'</u>,<u>'admin'</u>,<u>'1591091682'</u>,<u>'1591027200'</u>,<u>'1685721599'</u>,<u>'0'</u>,<u>''</u>
    ,<u>''</u>,<u>''</u>,<u>''</u>,<u>''</u>,<u>''</u>,<u>'http://192.168.0.10/file/upload/202006/02/175436411.jpg'</u>,<u>''</u>,<u>''</u>,<u>''</u>,<u>''</u>,<u>'1'</u>,<u>'0'</u>,<u>'0'</u>,<u>''</u>,<u>'0'</u>,<u>'0'</u>,<u>'3'</u>);<em>¬</em>
<b>INSERT</b><em>·</em>INTO<em>·</em><u>`aijiacms_ad`</u><em>·</em>VALUES(<u>'4'</u>,<u>'<span>房产网站</span>'</u>,<u>'6'</u>,<u>'5'</u>,<u>'0'</u>,<u>'0'</u>,<u>''</u>,<u>''</u>,<u>''</u>,<u>'0'</u>,<u>'admin'</u>,<u>'1590487686'</u>,<u>'admin'</u>,<u>'1590487686'</u>,<u>'1590422400'</u>,<u>'1685116799'</u>,<u>'0'</u>,<u>''</u>
    ,<u>''</u>,<u>''</u>,<u>''</u>,<u>''</u>,<u>''</u>,<u>'http://192.168.0.10/file/upload/202005/26/180802741.jpg'</u>,<u>''</u>,<u>''</u>,<u>''</u>,<u>''</u>,<u>'1'</u>,<u>'0'</u>,<u>'0'</u>,<u>''</u>,<u>'0'</u>,<u>'0'</u>,<u>'3'</u>);<em>¬</em>
<em>¬</em>
<b>DROP</b><em>·</em><b>TABLE</b><em>·</em><b>IF</b><em>·</em>EXISTS<em>·</em><u>`aijiacms_address`</u>;<em>¬</em>
<b>CREATE</b><em>·</em><b>TABLE</b><em>·</em><u>`aijiacms_address`</u><em>·</em>(<em>¬</em>
<em>··</em><u>`itemid`</u><em>·</em><i>bigint</i>(<s>20</s>)<em>·</em>unsigned<em>·</em><b>NOT</b><em>·</em><b>NULL</b><em>·</em>AUTO_INCREMENT,<em>¬</em>
<em>··</em><u>`truename`</u><em>·</em><i>varchar</i>(<s>30</s>)<em>·</em><b>NOT</b><em>·</em><b>NULL</b><em>·</em><b>DEFAULT</b><em>·</em><u>''</u>,<em>¬</em>
<em>··</em><u>`address`</u><em>·</em><i>varchar</i>(<s>255</s>)<em>·</em><b>NOT</b><em>·</em><b>NULL</b><em>·</em><b>DEFAULT</b><em>·</em><u>''</u>,<em>¬</em>
<em>··</em><u>`postcode`</u><em>·</em><i>varchar</i>(<s>10</s>)<em>·</em><b>NOT</b><em>·</em><b>NULL</b><em>·</em><b>DEFAULT</b><em>·</em><u>''</u>,<em>¬</em>
<em>··</em><u>`telephone`</u><em>·</em><i>varchar</i>(<s>30</s>)<em>·</em><b>NOT</b><em>·</em><b>NULL</b><em>·</em><b>DEFAULT</b><em>·</em><u>''</u>,<em>¬</em>
<em>··</em><u>`mobile`</u><em>·</em><i>varchar</i>(<s>30</s>)<em>·</em><b>NOT</b><em>·</em><b>NULL</b><em>·</em><b>DEFAULT</b><em>·</em><u>''</u>,<em>¬</em>
<em>··</em><u>`username`</u><em>·</em><i>varchar</i>(<s>30</s>)<em>·</em><b>DEFAULT</b><em>·</em><u>''</u>,<em>¬</em>
<em>··</em><u>`addtime`</u><em>·</em><i>int</i>(<s>10</s>)<em>·</em>unsigned<em>·</em><b>NOT</b><em>·</em><b>NULL</b><em>·</em><b>DEFAULT</b><em>·</em><u>'0'</u>,<em>¬</em>
<em>··</em><u>`editor`</u><em>·</em><i>varchar</i>(<s>30</s>)<em>·</em><b>NOT</b><em>·</em><b>NULL</b><em>·</em><b>DEFAULT</b><em>·</em><u>''</u>,<em>¬</em>
<em>··</em><u>`edittime`</u><em>·</em><i>int</i>(<s>10</s>)<em>·</em>unsigned<em>·</em><b>NOT</b><em>·</em><b>NULL</b><em>·</em><b>DEFAULT</b><em>·</em><u>'0'</u>,<em>¬</em>
<em>··</em><u>`listorder`</u><em>·</em>smallint(<s>4</s>)<em>·</em>unsigned<em>·</em><b>NOT</b><em>·</em><b>NULL</b><em>·</em><b>DEFAULT</b><em>·</em><u>'0'</u>,<em>¬</em></pre>
</div>

<!-- notch -->
<div class="a" style="left:444px;top:500px;width:13px;height:49px;background:#222;border:1px solid #555;border-left:none;border-radius:0 12px 12px 0"></div>
<svg class="i" style="left:445px;top:519px" width="9" height="12" viewBox="0 0 9 12"><path d="M7 1L2 6l5 5" fill="none" stroke="#fff" stroke-width="2.200"/></svg>

<!-- search box -->
<div class="a" style="left:1324px;top:267px;width:374px;height:89px;background:#dbdbdb;border-radius:0 0 0 5px"></div>
<div class="sb" style="left:1330px;top:272px;width:341px;border-radius:3px;color:#222;padding-left:6px;letter-spacing:-.1px">fangchan2.fugenxie6.com
<div class="sc" style="left:250px;width:27px"><svg width="8" height="12" viewBox="0 0 8 12"><path d="M6.500 1.500L2 6l4.500 4.500" fill="none" stroke="#666" stroke-width="2"/></svg></div>
<div class="sc" style="left:277px;width:28px"><svg width="8" height="12" viewBox="0 0 8 12"><path d="M1.500 1.500L6 6l-4.500 4.500" fill="none" stroke="#666" stroke-width="2"/></svg></div>
<div class="sc" style="left:305px;width:36px;color:#666">All</div></div>
<div class="t" style="left:1677px;top:273px;font-size:14px;font-weight:bold;color:#555">×</div>
<div class="sb" style="left:1330px;top:304px;width:353px;border-radius:3px;color:#222;padding-left:6px;letter-spacing:-.1px">192.168.0.10
<div class="sc" style="left:250px;width:67px;color:#666">Replace</div>
<div class="sc" style="left:317px;width:36px;color:#666">All</div></div>
<div class="a" style="left:1331px;top:333px;width:19px;height:19px;border:1px solid #ccc;text-align:center;font-size:13px;line-height:17px;color:#666">-</div>
<div class="t" style="left:1359px;top:333px;font-size:14px;color:#666">1 of 100</div>
<div class="opt" style="left:1616px;width:19px">.*</div>
<div class="opt" style="left:1637px;width:19px">Aa</div>
<div class="opt" style="left:1657px;width:20px">\b</div>
<div class="opt" style="left:1680px;width:12px">S</div>

<!-- status bar -->
<div class="a" style="left:444px;top:866px;width:1271px;height:35px;background:#454545"></div>
<div class="t st" style="left:459px;width:613px;overflow:hidden">文件位置:&nbsp;<span style="font-size:14.300px">/www/wwwroot/fangchan.test.com/fangchan/file/backup/2020-10-23 15.02.20 grtjzoa5e</span></div>
<div class="t st" style="left:1216px">行 57 ,列 67</div>
<div class="ssep" style="left:1310px"></div>
<div class="t st" style="left:1326px">历史版本: 无</div>
<div class="ssep" style="left:1419px"></div>
<div class="t st" style="left:1435px">空格: 4</div>
<div class="ssep" style="left:1497px"></div>
<div class="t st" style="left:1513px">编码: UTF-8</div>
<div class="ssep" style="left:1606px"></div>
<div class="t st" style="left:1620px">语言: SQL</div>
<div class="ssep" style="left:1698px"></div>

<!-- saving dialog -->
<div class="a" style="left:836px;top:495px;width:223px;height:65px;background:#fff"></div>
<svg class="i" style="left:851px;top:512px" width="31" height="30" viewBox="0 0 31 30"><circle cx="15.500" cy="15" r="14" fill="none" stroke="#f0a73a" stroke-width="1.600"/><rect x="14" y="7" width="3" height="11" fill="#f0a020"/><rect x="14" y="20" width="3" height="3" fill="#f0a020"/></svg>
<div class="t" style="left:892px;top:518px;font-size:14px;color:#666">保存文件中，请稍候</div>
<div class="t" style="left:1024px;top:518px;font-size:12px;color:#ccc;letter-spacing:-1px">···</div>

<!-- customer service + watermark -->
<div class="a" style="left:1823px;top:909px;width:58px;height:60px;border-radius:50%;background:#20a53a;box-shadow:0 1px 6px rgba(0,0,0,.35)"></div>
<div class="t" style="left:1840px;top:939px;font-size:12px;color:#fff;font-weight:bold">客服</div>
<div class="t" style="left:1568px;top:922px;height:30px;line-height:30px;font-size:24.700px;color:#eee;text-shadow:1px 1px 2px #222,0 0 1px #333">掘金技术社区 @ 全能程序员</div>
</body></html>
